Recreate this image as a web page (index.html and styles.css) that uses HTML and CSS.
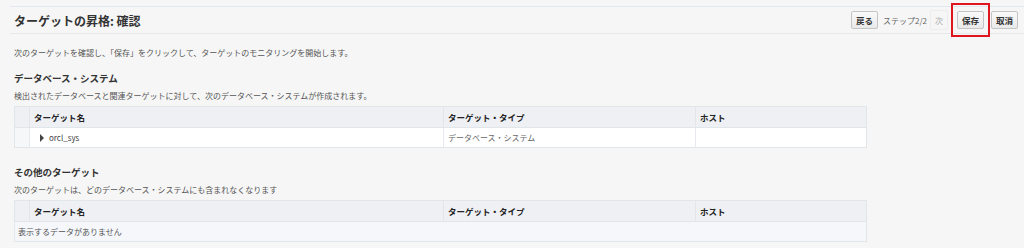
FILE: index.html
```html
<!DOCTYPE html>
<html lang="ja">
<head>
  <meta charset="UTF-8">
  <title>ターゲットの昇格: 確認</title>
  <link rel="stylesheet" href="styles.css">
</head>
<body>
  <div class="page">
    <div class="header">
      <h1>ターゲットの昇格: 確認</h1>
      <div class="train">
        <button class="btn">戻る</button>
        <span class="step">ステップ2/2</span>
        <span class="next">次</span>
        <span class="highlight"><button class="btn">保存</button></span>
        <button class="btn">取消</button>
      </div>
    </div>

    <p class="intro">次のターゲットを確認し、「保存」をクリックして、ターゲットのモニタリングを開始します。</p>

    <h2>データベース・システム</h2>
    <p class="desc">検出されたデータベースと関連ターゲットに対して、次のデータベース・システムが作成されます。</p>
    <table class="grid">
      <thead>
        <tr><th class="sel"></th><th class="c-name">ターゲット名</th><th class="c-type">ターゲット・タイプ</th><th>ホスト</th></tr>
      </thead>
      <tbody>
        <tr class="white"><td class="sel"></td><td><span class="tri"></span>orcl_sys</td><td class="muted">データベース・システム</td><td></td></tr>
      </tbody>
    </table>

    <h2 class="second">その他のターゲット</h2>
    <p class="desc">次のターゲットは、どのデータベース・システムにも含まれなくなります</p>
    <table class="grid">
      <thead>
        <tr><th class="sel"></th><th class="c-name">ターゲット名</th><th class="c-type">ターゲット・タイプ</th><th>ホスト</th></tr>
      </thead>
      <tbody>
        <tr class="empty"><td colspan="4">表示するデータがありません</td></tr>
      </tbody>
    </table>
  </div>
</body>
</html>
```

FILE: styles.css
```css
body {
  margin: 0;
  background: #f6f6f6;
  font-family: "Noto Sans CJK JP", "Noto Sans", sans-serif;
  color: #333;
}

.page {
  padding: 6px 0 0 10px;
}

.header {
  display: flex;
  justify-content: space-between;
  align-items: center;
  height: 26px;
  border-top: 1px solid #e3e8ee;
  border-bottom: 1px solid #e6e9ec;
}

h1 {
  margin: 0 0 0 4px;
  font-size: 12px;
  font-weight: bold;
  color: #333;
}

.train {
  display: flex;
  align-items: center;
  padding-right: 6px;
}

.btn {
  height: 18px;
  padding: 0 4px;
  font-family: inherit;
  font-size: 8.5px;
  font-weight: bold;
  color: #333;
  background: linear-gradient(#fafafa, #e9e9e9);
  border: 1px solid #c4c4c4;
  border-radius: 2px;
}

.step {
  margin: 0 3px 0 5px;
  font-size: 8px;
  color: #666;
}

.next {
  display: inline-flex;
  align-items: center;
  height: 18px;
  padding: 0 4px;
  font-size: 8px;
  color: #aaa;
  border: 1px solid #ededed;
  border-radius: 2px;
}

.highlight {
  display: inline-flex;
  margin: 0 1px 0 3px;
  padding: 6px 4px;
  border: 2px solid #e0161e;
}

h2 {
  margin: 0 0 0 4px;
  font-size: 9.5px;
  font-weight: bold;
  color: #333;
  line-height: 14px;
}

h2.second {
  margin-top: 17px;
}

.intro {
  margin: 13px 0 12px 4px;
  font-size: 8px;
  color: #555;
  line-height: 12px;
}

.desc {
  margin: 5px 0 4px 4px;
  font-size: 8px;
  color: #555;
  line-height: 12px;
}

.grid {
  margin-left: 4px;
  width: 853px;
  border-collapse: collapse;
  border: 1px solid #e1e6eb;
  font-size: 8.5px;
}

.grid th {
  height: 20px;
  padding: 0 4px;
  text-align: left;
  font-weight: bold;
  color: #222;
  background: #eef0f4;
  border-left: 1px solid #e1e6eb;
  border-bottom: 1px solid #e1e6eb;
}

.grid th.sel, .grid td.sel {
  width: 6px;
  padding: 0 4px;
  border-left: none;
}

.grid th.c-name {
  width: 405px;
}

.grid th.c-type {
  width: 243px;
}

.grid td {
  height: 19px;
  padding: 0 4px;
  border-left: 1px solid #e6eaee;
  color: #444;
  font-size: 8px;
}

.grid tr.white td {
  background: #fff;
}

.grid tr.white td.sel {
  background: #f6f7f9;
}

.grid td.muted {
  color: #666;
}

.tri {
  display: inline-block;
  width: 0;
  height: 0;
  margin: 0 5px 0 6px;
  border-top: 4px solid transparent;
  border-bottom: 4px solid transparent;
  border-left: 4px solid #444;
  vertical-align: -1px;
}

.grid tr.empty td {
  padding: 0 3px;
  background: #f5f7fb;
  color: #555;
}
```
